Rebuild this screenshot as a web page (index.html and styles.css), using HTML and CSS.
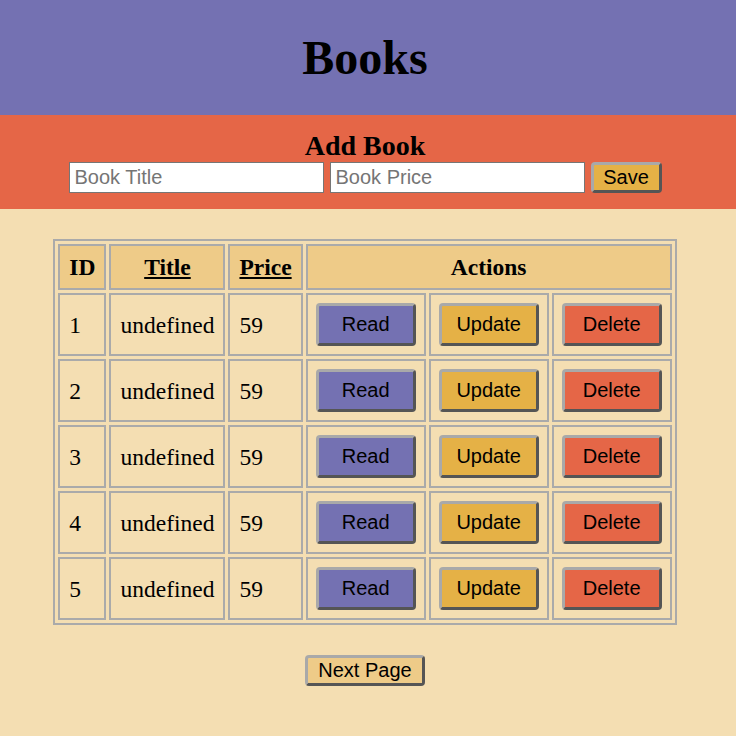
FILE: index.html
```html
<!DOCTYPE html>
<html>
<head>
<meta charset="utf-8">
<title>Books</title>
<link rel="stylesheet" href="styles.css">
</head>
<body>
<header class="top">
  <h1 class="title">Books</h1>
</header>
<section class="add">
  <h2 class="add-title">Add Book</h2>
  <form class="add-form">
    <input class="field" type="text" placeholder="Book Title">
    <input class="field" type="text" placeholder="Book Price">
    <button class="btn btn-save" type="button">Save</button>
  </form>
</section>
<main class="content">
  <table class="books">
    <thead>
      <tr>
        <th>ID</th>
        <th><a class="sort" href="#">Title</a></th>
        <th><a class="sort" href="#">Price</a></th>
        <th colspan="3">Actions</th>
      </tr>
    </thead>
    <tbody>
      <tr><td>1</td><td>undefined</td><td>59</td><td class="act"><button class="btn btn-act btn-read">Read</button></td><td class="act"><button class="btn btn-act btn-update">Update</button></td><td class="act"><button class="btn btn-act btn-delete">Delete</button></td></tr>
      <tr><td>2</td><td>undefined</td><td>59</td><td class="act"><button class="btn btn-act btn-read">Read</button></td><td class="act"><button class="btn btn-act btn-update">Update</button></td><td class="act"><button class="btn btn-act btn-delete">Delete</button></td></tr>
      <tr><td>3</td><td>undefined</td><td>59</td><td class="act"><button class="btn btn-act btn-read">Read</button></td><td class="act"><button class="btn btn-act btn-update">Update</button></td><td class="act"><button class="btn btn-act btn-delete">Delete</button></td></tr>
      <tr><td>4</td><td>undefined</td><td>59</td><td class="act"><button class="btn btn-act btn-read">Read</button></td><td class="act"><button class="btn btn-act btn-update">Update</button></td><td class="act"><button class="btn btn-act btn-delete">Delete</button></td></tr>
      <tr><td>5</td><td>undefined</td><td>59</td><td class="act"><button class="btn btn-act btn-read">Read</button></td><td class="act"><button class="btn btn-act btn-update">Update</button></td><td class="act"><button class="btn btn-act btn-delete">Delete</button></td></tr>
    </tbody>
  </table>
  <div class="pager">
    <button class="btn btn-next" type="button">Next Page</button>
  </div>
</main>
</body>
</html>
```
FILE: styles.css
```css
html, body {
  margin: 0;
  padding: 0;
  background: #f4deb2;
  font-family: "Liberation Serif", "Times New Roman", serif;
  color: #000;
}

.top {
  background: #7471b2;
  padding: 30px 6px 30px 0;
  text-align: center;
}

.title {
  margin: 0;
  font-size: 48px;
  line-height: 55px;
  font-weight: bold;
}

.add {
  background: #e56647;
  padding: 15px 6px 16px 0;
  text-align: center;
}

.add-title {
  margin: 0;
  font-size: 28px;
  line-height: 32px;
  font-weight: bold;
}

.add-form {
  display: flex;
  justify-content: center;
  gap: 6px;
  margin: 0;
}

.field {
  box-sizing: border-box;
  width: 255px;
  height: 31px;
  border: 1px solid #767676;
  padding: 3px 5px;
  font-family: "Liberation Sans", Arial, sans-serif;
  font-size: 20px;
  background: #fff;
  color: #000;
  outline: none;
}

.field::placeholder {
  color: #757575;
}

.btn {
  box-sizing: border-box;
  font-family: "Liberation Sans", Arial, sans-serif;
  font-size: 20px;
  color: #000;
  border-width: 3px;
  border-style: solid;
  border-color: #a9a9a9 #555 #555 #a9a9a9;
  border-radius: 4px;
  cursor: pointer;
}

.btn-save {
  height: 31px;
  width: 71px;
  padding: 0;
  background: #e5b146;
  line-height: 23px;
}

.content {
  padding: 30px 6px 0 0;
}

.books {
  margin: 0 auto;
  border: 2px solid #aaa;
  border-spacing: 3px;
}

.books th,
.books td {
  border: 2px solid #aaa;
  padding: 8px 9px;
  font-size: 23.5px;
  line-height: 26px;
}

.books th {
  background: #eecb88;
  font-weight: bold;
  text-align: center;
}

.books td {
  text-align: left;
}

.books td.act {
  padding: 8px;
}

.sort {
  color: #000;
  text-decoration: underline;
}

.btn-act {
  width: 100px;
  height: 43px;
  padding: 0;
  line-height: 23px;
  display: block;
}

.btn-read {
  background: #7471b2;
}

.btn-update {
  background: #e5b146;
}

.btn-delete {
  background: #e56647;
}

.pager {
  display: flex;
  justify-content: center;
  padding: 30px 0 50px;
}

.btn-next {
  height: 31px;
  padding: 0 10px;
  background: #eecb88;
  line-height: 23px;
}
```
